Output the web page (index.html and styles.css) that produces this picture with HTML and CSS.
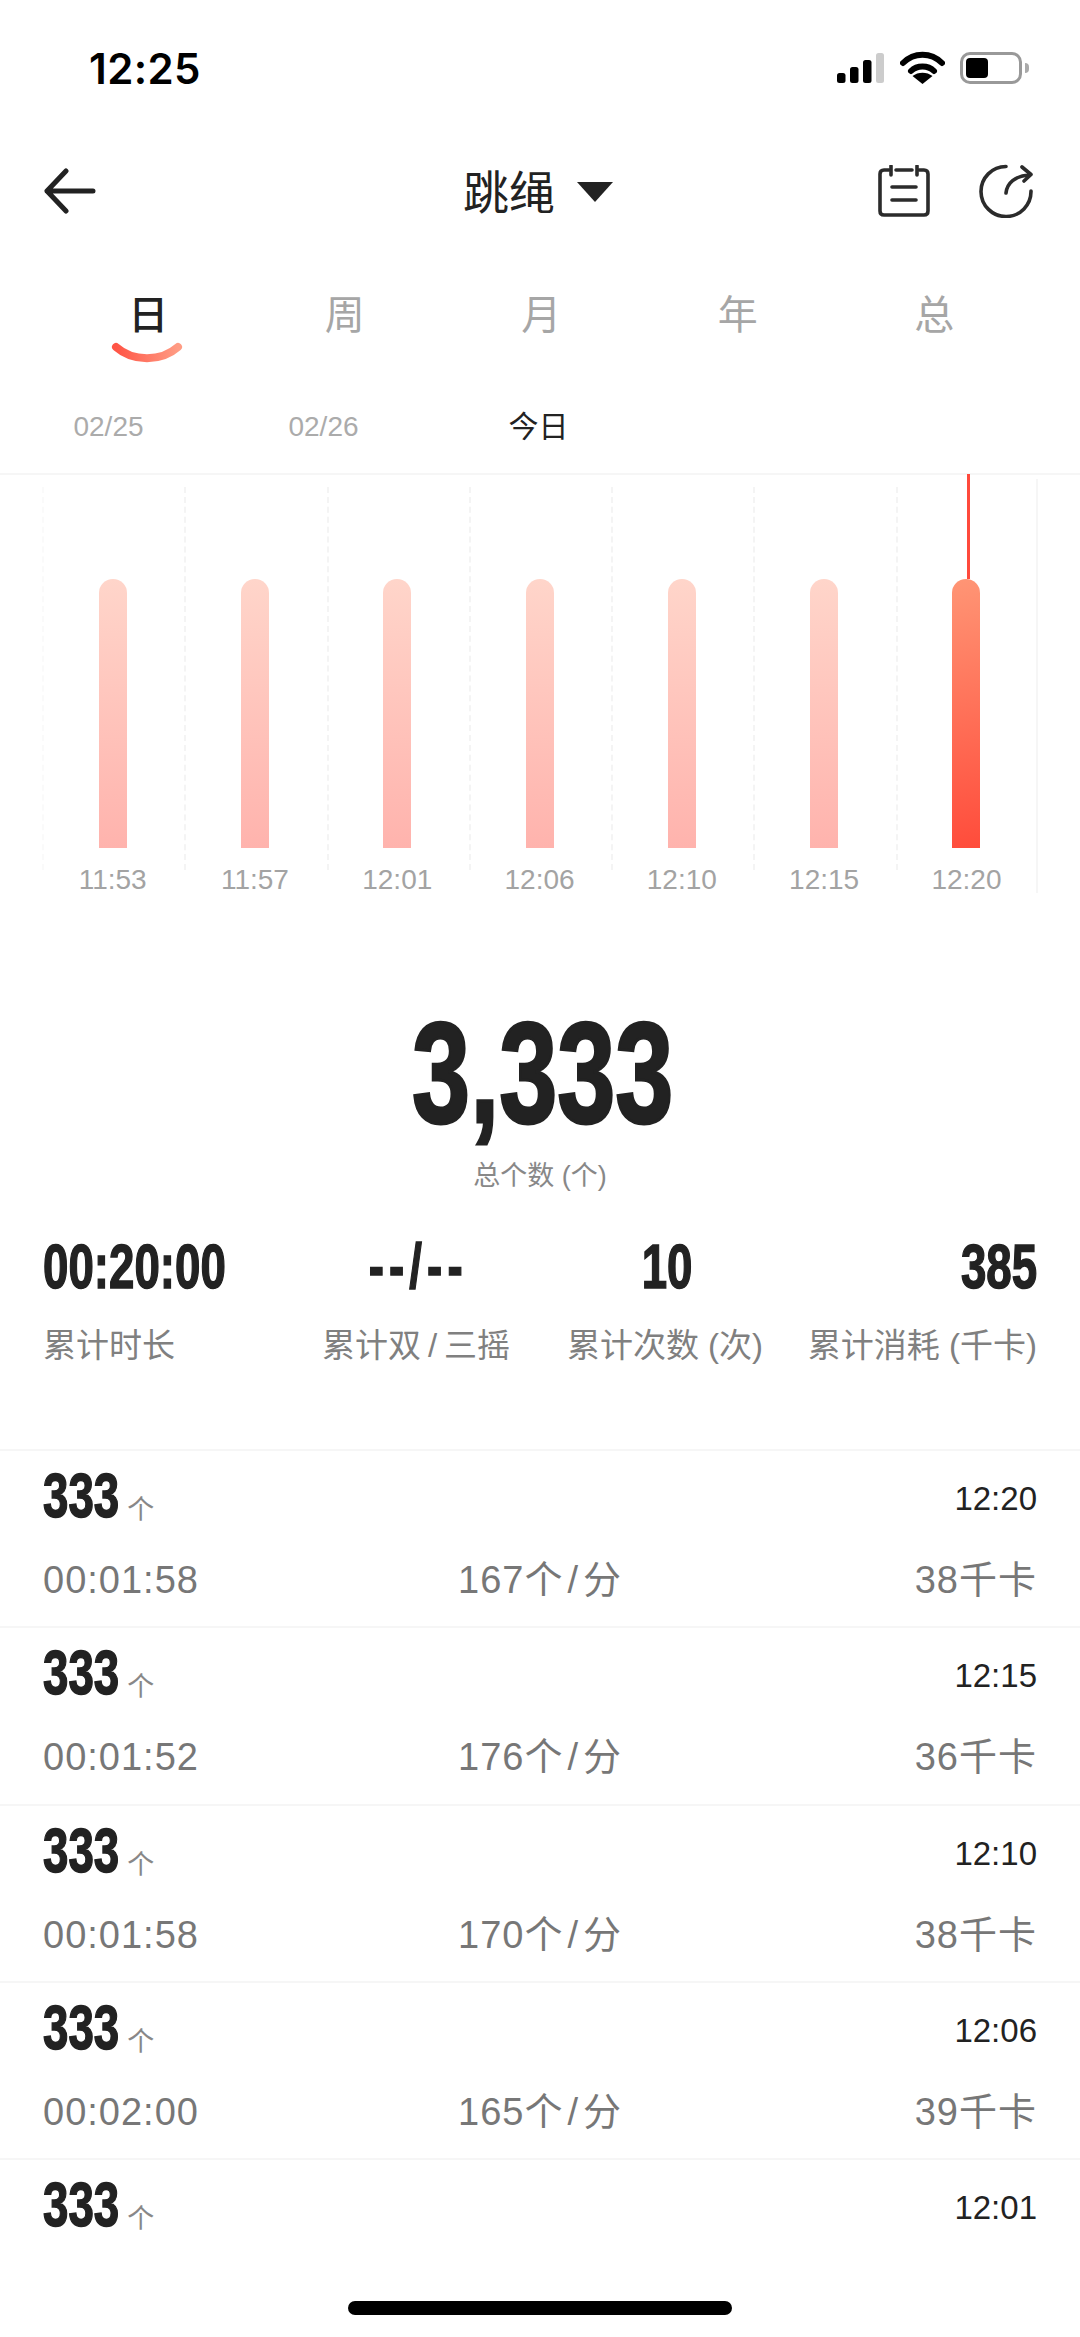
FILE: index.html
```html
<!DOCTYPE html>
<html lang="zh-CN">
<head>
    <meta charset="UTF-8">
    <meta name="viewport" content="width=device-width, initial-scale=1.0">
    <title>跳绳</title>
    <link rel="stylesheet" href="styles.css">
</head>
<body>
    <div class="screen">
        <div class="status-bar">
            <span class="clock">12:25</span>
            <div class="status-icons">
                <svg class="signal" width="47" height="30" viewBox="0 0 47 30">
                    <rect x="0" y="20" width="8.5" height="10" rx="2.5" fill="#000"/>
                    <rect x="13" y="14" width="8.5" height="16" rx="2.5" fill="#000"/>
                    <rect x="26" y="7" width="8.5" height="23" rx="2.5" fill="#000"/>
                    <rect x="39" y="0" width="8" height="30" rx="2.5" fill="#ccc"/>
                </svg>
                <svg class="wifi" width="45" height="33" viewBox="0 0 45 33">
                    <path d="M3 12 C14 1 31 1 42 12" fill="none" stroke="#000" stroke-width="6" stroke-linecap="round"/>
                    <path d="M11 20 C17 14 28 14 34 20" fill="none" stroke="#000" stroke-width="6" stroke-linecap="round"/>
                    <path d="M22.5 33 L12.5 25 C18 20.5 27 20.5 32.5 25 Z" fill="#000"/>
                </svg>
                <div class="battery">
                    <div class="battery-fill"></div>
                </div>
                <div class="battery-nub"></div>
            </div>
        </div>

        <div class="nav">
            <svg class="back" width="52" height="46" viewBox="0 0 52 46">
                <path d="M22 3 L3 23 L22 43 M3 23 L49 23" fill="none" stroke="#222" stroke-width="5" stroke-linecap="round" stroke-linejoin="round"/>
            </svg>
            <div class="nav-title">
                <span>跳绳</span>
                <i class="caret"></i>
            </div>
            <div class="nav-actions">
                <svg width="52" height="52" viewBox="0 0 52 52">
                    <path d="M11 5 H6 Q2 5 2 9 V46 Q2 50 6 50 H46 Q50 50 50 46 V9 Q50 5 46 5 H41 M18 5 H34" fill="none" stroke="#2b2b2b" stroke-width="3.6" stroke-linecap="round"/>
                    <path d="M13 1 V10 M39 1 V10 M14 22 H38 M14 35 H38" fill="none" stroke="#2b2b2b" stroke-width="3.6" stroke-linecap="round"/>
                </svg>
                <svg width="55" height="54" viewBox="0 0 55 54">
                    <path d="M27 2.5 A25 25 0 1 0 52 27" fill="none" stroke="#2b2b2b" stroke-width="3.6" stroke-linecap="round"/>
                    <path d="M27 29 C28 19 36 12 50 11 M43 3 L52 10.5 L45 17" fill="none" stroke="#2b2b2b" stroke-width="3.6" stroke-linecap="round" stroke-linejoin="round"/>
                </svg>
            </div>
        </div>

        <div class="tabs">
            <div class="tab active">日
                <svg class="smile" width="72" height="22" viewBox="0 0 72 22">
                    <defs>
                        <linearGradient id="smileFill" x1="0" y1="0" x2="1" y2="0">
                            <stop offset="0" stop-color="#ff5546"/>
                            <stop offset="1" stop-color="#ff9c84"/>
                        </linearGradient>
                    </defs>
                    <path d="M5 5 C22 20 50 20 67 5" fill="none" stroke="url(#smileFill)" stroke-width="8" stroke-linecap="round"/>
                </svg>
            </div>
            <div class="tab">周</div>
            <div class="tab">月</div>
            <div class="tab">年</div>
            <div class="tab">总</div>
        </div>

        <div class="dates">
            <span>02/25</span>
            <span>02/26</span>
            <span class="today">今日</span>
        </div>

        <div class="chart">
            <div class="col"><div class="bar"></div><span>11:53</span></div>
            <div class="col"><div class="bar"></div><span>11:57</span></div>
            <div class="col"><div class="bar"></div><span>12:01</span></div>
            <div class="col"><div class="bar"></div><span>12:06</span></div>
            <div class="col"><div class="bar"></div><span>12:10</span></div>
            <div class="col"><div class="bar"></div><span>12:15</span></div>
            <div class="col"><div class="bar current"></div><span>12:20</span></div>
        </div>

        <div class="total">
            <div class="big-num"><span class="cond">3,333</span></div>
            <div class="total-label">总个数 (个)</div>
        </div>

        <div class="stats">
            <div class="stat left">
                <div class="num"><span class="cond">00:20:00</span></div>
                <div class="stat-label">累计时长</div>
            </div>
            <div class="stat">
                <div class="num shifted"><span class="cond dashes">--/--</span></div>
                <div class="stat-label">累计双<span class="slash">/</span>三摇</div>
            </div>
            <div class="stat">
                <div class="num shifted"><span class="cond">10</span></div>
                <div class="stat-label">累计次数 (次)</div>
            </div>
            <div class="stat right">
                <div class="num"><span class="cond">385</span></div>
                <div class="stat-label">累计消耗 (千卡)</div>
            </div>
        </div>

        <div class="records">
            <div class="record">
                <div class="record-top">
                    <div class="count"><span class="cond">333</span><em>个</em></div>
                    <div class="time">12:20</div>
                </div>
                <div class="record-bottom">
                    <span>00:01:58</span><span>167个<i class="slash">/</i>分</span><span>38千卡</span>
                </div>
            </div>
            <div class="record">
                <div class="record-top">
                    <div class="count"><span class="cond">333</span><em>个</em></div>
                    <div class="time">12:15</div>
                </div>
                <div class="record-bottom">
                    <span>00:01:52</span><span>176个<i class="slash">/</i>分</span><span>36千卡</span>
                </div>
            </div>
            <div class="record">
                <div class="record-top">
                    <div class="count"><span class="cond">333</span><em>个</em></div>
                    <div class="time">12:10</div>
                </div>
                <div class="record-bottom">
                    <span>00:01:58</span><span>170个<i class="slash">/</i>分</span><span>38千卡</span>
                </div>
            </div>
            <div class="record">
                <div class="record-top">
                    <div class="count"><span class="cond">333</span><em>个</em></div>
                    <div class="time">12:06</div>
                </div>
                <div class="record-bottom">
                    <span>00:02:00</span><span>165个<i class="slash">/</i>分</span><span>39千卡</span>
                </div>
            </div>
            <div class="record">
                <div class="record-top">
                    <div class="count"><span class="cond">333</span><em>个</em></div>
                    <div class="time">12:01</div>
                </div>
            </div>
        </div>

        <div class="home-bar"></div>
    </div>
</body>
</html>
```

FILE: styles.css
```css
* {
    margin: 0;
    padding: 0;
    box-sizing: border-box;
}

html, body {
    background: #fff;
}

body {
    width: 1080px;
    height: 2337px;
    overflow: hidden;
    font-family: "Liberation Sans", "Noto Sans CJK SC", sans-serif;
    color: #222;
}

.screen {
    position: relative;
    width: 1080px;
    height: 2337px;
    overflow: hidden;
}

/* status bar */
.status-bar {
    height: 146px;
    padding: 51px 51px 0 89px;
    display: flex;
    justify-content: space-between;
    align-items: flex-start;
}

.clock {
    font-family: Inter, "Liberation Sans", sans-serif;
    font-size: 42px;
    font-weight: 600;
    letter-spacing: 0.4px;
    line-height: 36px;
    color: #000;
}

.status-icons {
    display: flex;
    align-items: center;
    height: 33px;
}

.signal { margin-right: 16px; }
.wifi { margin-right: 15px; }

.battery {
    width: 62px;
    height: 32px;
    border: 3px solid #999;
    border-radius: 10px;
    padding: 3px;
}

.battery-fill {
    width: 22px;
    height: 100%;
    background: #000;
    border-radius: 4px;
}

.battery-nub {
    width: 4px;
    height: 10px;
    margin-left: 3px;
    background: #aaa;
    border-radius: 0 4px 4px 0;
}

/* top navigation */
.nav {
    position: relative;
    height: 90px;
    padding: 0 46px 0 44px;
    display: flex;
    justify-content: space-between;
    align-items: center;
}

.nav-title {
    position: absolute;
    left: 463px;
    top: 17px;
    display: flex;
    align-items: center;
    font-size: 46px;
    line-height: 60px;
}

.caret {
    margin-left: 22px;
    margin-top: -3px;
    width: 0;
    height: 0;
    border-left: 18px solid transparent;
    border-right: 18px solid transparent;
    border-top: 20px solid #222;
}

.nav-actions {
    display: flex;
    align-items: center;
    gap: 49px;
}

/* period tabs */
.tabs {
    display: flex;
    padding-left: 50px;
    margin-top: 54px;
}

.tab {
    position: relative;
    width: 196.5px;
    text-align: center;
    font-size: 40px;
    line-height: 50px;
    color: #a6a6a6;
}

.tab.active {
    font-weight: 500;
    color: #222;
}

.smile {
    position: absolute;
    left: 61px;
    top: 52px;
}

.dates {
    display: flex;
    padding-left: 1px;
    margin-top: 69px;
    height: 66px;
    border-bottom: 2px solid #f6f6f6;
}

.dates span {
    width: 215px;
    text-align: center;
    font-size: 28px;
    line-height: 36px;
    color: #ababab;
}

.dates .today {
    font-size: 30px;
    color: #222;
}

/* bar chart */
.chart {
    display: flex;
    width: 996px;
    height: 414px;
    margin-left: 42px;
    margin-top: 4px;
    padding-top: 8px;
    border-right: 2px solid #f6f6f6;
}

.col {
    flex-shrink: 0;
    width: 142.3px;
    height: 383px;
    padding: 92px 3px 0 0;
    border-left: 2px dashed #f4f4f4;
    display: flex;
    flex-direction: column;
    align-items: center;
}

.col:first-child {
    border-left-color: #fafafa;
}

.bar {
    position: relative;
    flex-shrink: 0;
    width: 28px;
    height: 269px;
    border-radius: 14px 14px 0 0;
    background: linear-gradient(180deg, #ffd5ca, #ffb3ad);
}

.bar.current {
    background: linear-gradient(170deg, #ff9575, #ff4c3b);
}

.bar.current::before {
    content: "";
    position: absolute;
    left: 15px;
    bottom: 100%;
    width: 2.5px;
    height: 105px;
    background: #ff4a3c;
}

.col span {
    margin-top: 16px;
    font-size: 28px;
    line-height: 32px;
    color: #a3a3a3;
}

/* condensed figures */
.cond {
    display: inline-block;
    font-family: "Liberation Sans", sans-serif;
    font-weight: 700;
    color: #222;
    transform: scaleX(0.725);
    -webkit-text-stroke: 1.5px #222;
}

.cond.dashes {
    letter-spacing: 7px;
}

.total {
    margin-top: 116px;
    text-align: center;
}

.big-num {
    height: 128px;
    padding-left: 6px;
    font-size: 142px;
    line-height: 128px;
}

.big-num .cond {
    transform: scaleX(0.735);
    -webkit-text-stroke: 3px #222;
}

.total-label {
    margin-top: 21px;
    font-size: 27px;
    line-height: 36px;
    color: #888;
}

.stats {
    display: grid;
    grid-template-columns: 253px 240px 258px 243px;
    margin: 42px 0 0 43px;
    text-align: center;
}

.num {
    height: 60px;
    font-size: 63px;
    line-height: 60px;
}

.num.shifted {
    padding-left: 5px;
}

.stat.left { text-align: left; }
.stat.left .cond { transform-origin: left center; }
.stat.right { text-align: right; }
.stat.right .cond { transform-origin: right center; }

.stat-label {
    margin-top: 29px;
    font-size: 33px;
    line-height: 42px;
    white-space: nowrap;
    color: #808080;
}

.slash {
    font-style: normal;
    margin: 0 4px;
}

.stat-label .slash {
    margin: 0 7px;
}

/* records list */
.records {
    margin-top: 82px;
}

.record {
    height: 177.25px;
    padding: 14px 43px 0;
    border-top: 2px solid #f6f6f6;
}

.record-top {
    display: flex;
    justify-content: space-between;
    align-items: flex-start;
    height: 60px;
}

.count {
    display: flex;
    align-items: flex-end;
    font-size: 63px;
    line-height: 60px;
}

.count .cond {
    transform-origin: left center;
}

.count em {
    font-style: normal;
    font-size: 27px;
    line-height: 30px;
    color: #888;
    margin-left: -21px;
}

.time {
    padding-top: 16px;
    font-size: 33px;
    line-height: 36px;
    color: #222;
}

.record-bottom {
    display: grid;
    grid-template-columns: 1fr 1fr 1fr;
    margin-top: 31px;
    font-size: 38px;
    letter-spacing: 1px;
    line-height: 48px;
    color: #777;
}

.record-bottom span:nth-child(2) {
    text-align: center;
}

.record-bottom span:last-child {
    text-align: right;
}

.home-bar {
    position: absolute;
    left: 348px;
    bottom: 22px;
    width: 384px;
    height: 14px;
    border-radius: 7px;
    background: #000;
}
```
